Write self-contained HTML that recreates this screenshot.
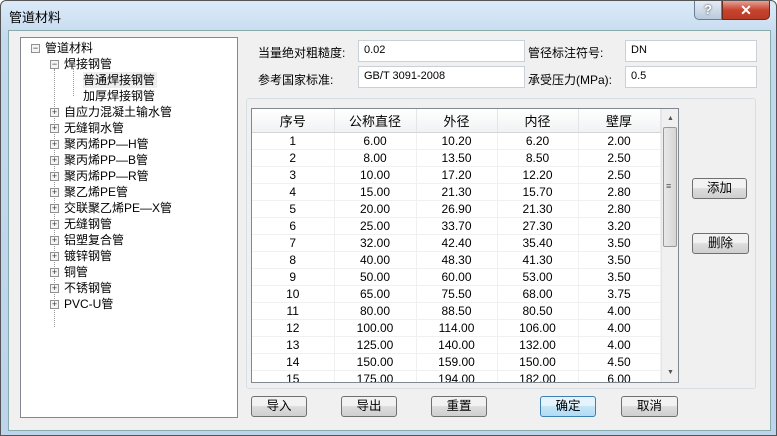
<!DOCTYPE html>
<html><head><meta charset="utf-8"><style>
*{margin:0;padding:0;box-sizing:border-box}
body{width:777px;height:436px;overflow:hidden;background:#fff;font-family:"Liberation Sans","Noto Sans CJK SC",sans-serif;font-size:12px;color:#000;position:relative}
.win{position:absolute;left:0;top:0;width:777px;height:436px;background:linear-gradient(#dbeaf8,#c3d9ef 40px,#bcd4ec);border:1px solid #555;border-radius:6px 6px 0 0}
.title{position:absolute;left:8px;top:6px;font-size:13px}
.client{position:absolute;left:7px;top:29px;width:763px;height:401px;background:#f0f0f0;border:1px solid #8aa;}
.a{position:absolute}
.tree{left:20px;top:37px;width:218px;height:381px;background:#fff;border:1px solid #828790}
.ti{position:absolute;white-space:nowrap;font-size:12px;line-height:16px}
.pm{position:absolute;width:9px;height:9px;border:1px solid #919191;background:#f4f4f4;font-size:9px;line-height:7px;text-align:center;color:#333}
.inp{position:absolute;background:#fff;border:1px solid #c9d0d8;height:22px;padding:3px 5px;font-size:11px}
.lbl{position:absolute;font-size:12px}
.grp{left:246px;top:98px;width:510px;height:291px;border:1px solid #d5dfe5;border-radius:3px}
.tbl{left:251px;top:108px;width:428px;height:275px;background:#fff;border:1px solid #828790;overflow:hidden}
table{border-collapse:collapse;position:absolute;left:0;top:0}
td{width:81px;height:17px;text-align:center;border-right:1px solid #f0f0f0;border-bottom:1px solid #f0f0f0;font-size:12px;line-height:16px}
th{height:23px;font-weight:normal;font-size:13px;background:linear-gradient(#fff,#f1f2f4);border-right:1px solid #e3e5e8;border-bottom:1px solid #d5d5d5}
.sb{position:absolute;left:409px;top:0;width:17px;height:273px;background:#f0f0f0;border-left:1px solid #e5e5e5}
.btn{position:absolute;height:21px;border:1px solid #707070;border-radius:3px;background:linear-gradient(#f2f2f2 45%,#dddddd 50%,#cfcfcf);text-align:center;font-size:12.5px;line-height:19px}
</style></head><body>
<div class="win">
<div class="title">管道材料</div>
<div class="a" style="left:693px;top:0;width:28px;height:19px;border:1px solid #6b7d93;border-top:none;border-radius:0 0 0 5px;background:linear-gradient(#e3ecf6,#b9cadc);color:#fff;text-align:center;font-weight:bold;font-size:13px;line-height:18px;text-shadow:0 0 2px #333">?</div>
<div class="a" style="left:721px;top:0;width:48px;height:19px;border:1px solid #6b2a20;border-top:none;border-radius:0 0 5px 0;background:linear-gradient(#e8a195,#c7442f 50%,#b83a24);color:#fff;text-align:center;font-weight:bold;font-size:14px;line-height:18px">✕</div>
<div class="client"></div>
</div>
<div class="a tree">
<div class="pm" style="left:10px;top:6px">−</div>
<div class="ti" style="left:24px;top:2px">管道材料</div>
<div class="pm" style="left:29px;top:22px">−</div>
<div class="ti" style="left:43px;top:18px">焊接钢管</div>
<div class="ti" style="left:62px;top:34px;background:#eee;padding-right:2px">普通焊接钢管</div>
<div class="ti" style="left:62px;top:50px">加厚焊接钢管</div>
<div class="a" style="left:33px;top:31px;height:258px;border-left:1px dotted #999"></div>
<div class="a" style="left:52px;top:30px;height:28px;border-left:1px dotted #999"></div>
<div class="pm" style="left:29px;top:70px">+</div><div class="ti" style="left:43px;top:66px">自应力混凝土输水管</div>
<div class="pm" style="left:29px;top:86px">+</div><div class="ti" style="left:43px;top:82px">无缝铜水管</div>
<div class="pm" style="left:29px;top:102px">+</div><div class="ti" style="left:43px;top:98px">聚丙烯PP—H管</div>
<div class="pm" style="left:29px;top:118px">+</div><div class="ti" style="left:43px;top:114px">聚丙烯PP—B管</div>
<div class="pm" style="left:29px;top:134px">+</div><div class="ti" style="left:43px;top:130px">聚丙烯PP—R管</div>
<div class="pm" style="left:29px;top:150px">+</div><div class="ti" style="left:43px;top:146px">聚乙烯PE管</div>
<div class="pm" style="left:29px;top:166px">+</div><div class="ti" style="left:43px;top:162px">交联聚乙烯PE—X管</div>
<div class="pm" style="left:29px;top:182px">+</div><div class="ti" style="left:43px;top:178px">无缝钢管</div>
<div class="pm" style="left:29px;top:198px">+</div><div class="ti" style="left:43px;top:194px">铝塑复合管</div>
<div class="pm" style="left:29px;top:214px">+</div><div class="ti" style="left:43px;top:210px">镀锌钢管</div>
<div class="pm" style="left:29px;top:230px">+</div><div class="ti" style="left:43px;top:226px">铜管</div>
<div class="pm" style="left:29px;top:246px">+</div><div class="ti" style="left:43px;top:242px">不锈钢管</div>
<div class="pm" style="left:29px;top:262px">+</div><div class="ti" style="left:43px;top:258px">PVC-U管</div>
</div>
<div class="lbl" style="left:258px;top:44px">当量绝对粗糙度:</div>
<div class="inp" style="left:358px;top:40px;width:167px">0.02</div>
<div class="lbl" style="left:258px;top:71px">参考国家标准:</div>
<div class="inp" style="left:358px;top:66px;width:167px">GB/T 3091-2008</div>
<div class="lbl" style="left:528px;top:44px">管径标注符号:</div>
<div class="inp" style="left:625px;top:40px;width:132px">DN</div>
<div class="lbl" style="left:528px;top:71px">承受压力(MPa):</div>
<div class="inp" style="left:625px;top:66px;width:132px">0.5</div>
<div class="a grp"></div>
<div class="a tbl">
<table>
<tr><th style="width:82px">序号</th><th style="width:82px">公称直径</th><th style="width:81px">外径</th><th style="width:81px">内径</th><th style="width:82px">壁厚</th></tr>
<tr><td>1</td><td>6.00</td><td>10.20</td><td>6.20</td><td>2.00</td></tr>
<tr><td>2</td><td>8.00</td><td>13.50</td><td>8.50</td><td>2.50</td></tr>
<tr><td>3</td><td>10.00</td><td>17.20</td><td>12.20</td><td>2.50</td></tr>
<tr><td>4</td><td>15.00</td><td>21.30</td><td>15.70</td><td>2.80</td></tr>
<tr><td>5</td><td>20.00</td><td>26.90</td><td>21.30</td><td>2.80</td></tr>
<tr><td>6</td><td>25.00</td><td>33.70</td><td>27.30</td><td>3.20</td></tr>
<tr><td>7</td><td>32.00</td><td>42.40</td><td>35.40</td><td>3.50</td></tr>
<tr><td>8</td><td>40.00</td><td>48.30</td><td>41.30</td><td>3.50</td></tr>
<tr><td>9</td><td>50.00</td><td>60.00</td><td>53.00</td><td>3.50</td></tr>
<tr><td>10</td><td>65.00</td><td>75.50</td><td>68.00</td><td>3.75</td></tr>
<tr><td>11</td><td>80.00</td><td>88.50</td><td>80.50</td><td>4.00</td></tr>
<tr><td>12</td><td>100.00</td><td>114.00</td><td>106.00</td><td>4.00</td></tr>
<tr><td>13</td><td>125.00</td><td>140.00</td><td>132.00</td><td>4.00</td></tr>
<tr><td>14</td><td>150.00</td><td>159.00</td><td>150.00</td><td>4.50</td></tr>
<tr><td>15</td><td>175.00</td><td>194.00</td><td>182.00</td><td>6.00</td></tr>
</table>
<div class="sb">
<div class="a" style="left:5px;top:6px;font-size:7px;color:#555">▲</div>
<div class="a" style="left:1px;top:18px;width:14px;height:120px;border:1px solid #999;border-radius:2px;background:linear-gradient(90deg,#e8e8e8,#d6d6d6)"></div>
<div class="a" style="left:4px;top:72px;font-size:9px;color:#555">≡</div>
<div class="a" style="left:5px;top:260px;font-size:7px;color:#555">▼</div>
</div>
</div>
<div class="btn" style="left:692px;top:178px;width:55px">添加</div>
<div class="btn" style="left:692px;top:233px;width:57px">删除</div>
<div class="btn" style="left:251px;top:396px;width:56px">导入</div>
<div class="btn" style="left:341px;top:396px;width:56px">导出</div>
<div class="btn" style="left:431px;top:396px;width:56px">重置</div>
<div class="btn" style="left:540px;top:396px;width:56px;border-color:#3c7fb1;background:linear-gradient(#e5f4fc 45%,#c4e5f6 50%,#b1dcf4)">确定</div>
<div class="btn" style="left:621px;top:396px;width:57px">取消</div>
</body></html>
